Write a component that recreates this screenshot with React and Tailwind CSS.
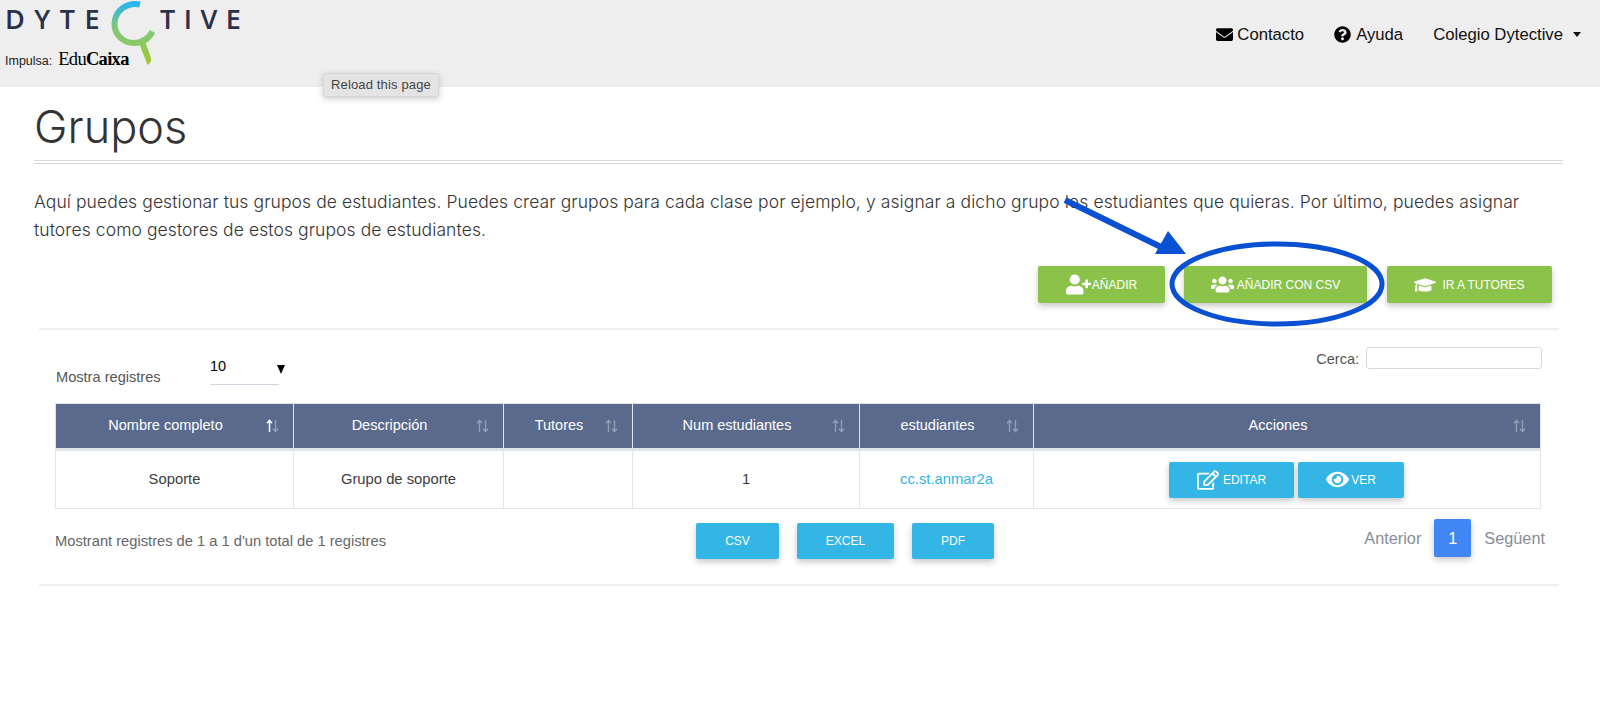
import { FaEnvelope, FaQuestionCircle, FaUserPlus, FaUsers, FaGraduationCap, FaRegEdit, FaEye } from "react-icons/fa";

const columnas = [
  { nombre: "Nombre completo", ancho: "w-[238px]", activa: true },
  { nombre: "Descripción", ancho: "w-[210px]" },
  { nombre: "Tutores", ancho: "w-[129px]" },
  { nombre: "Num estudiantes", ancho: "w-[227px]" },
  { nombre: "estudiantes", ancho: "w-[174px]" },
  { nombre: "Acciones", ancho: "w-[507px]" },
];

function SortIcon({ activa }) {
  return (
    <svg width="13" height="14" viewBox="0 0 13 14" className="absolute right-[14px] top-[15px]">
      <g fill="none" strokeWidth="1.4" stroke="#fff" opacity={activa ? 1 : 0.35}>
        <path d="M3.5 13V2M1 4.2 3.5 1.4 6 4.2" />
      </g>
      <g fill="none" strokeWidth="1.4" stroke="#fff" opacity="0.35">
        <path d="M9.5 1v11M7 9.8l2.5 2.8L12 9.8" />
      </g>
    </svg>
  );
}

function Boton({ color, className, children }) {
  return (
    <button className={`${color} ${className} flex items-center justify-center rounded-[2px] text-white text-[12px] shadow-[0_3px_6px_rgba(0,0,0,0.22)]`}>
      {children}
    </button>
  );
}

function Logo() {
  return (
    <div className="pl-[5px]">
      <div className="flex h-[66px] items-start">
        <span className="mt-[3px] w-[106px] text-[27px] leading-[32px] font-semibold tracking-[9.500px] text-[#2b3148] font-['Open_Sans',sans-serif]">DYTE</span>
        <svg width="50" height="68" viewBox="0 0 50 68" className="shrink-0">
          <defs>
            <linearGradient id="lupa" x1="0" y1="0" x2="0" y2="1">
              <stop offset="0" stopColor="#29b6ee" />
              <stop offset="0.55" stopColor="#7cc67c" />
              <stop offset="1" stopColor="#8cc865" />
            </linearGradient>
            <linearGradient id="mango" x1="0" y1="0" x2="0" y2="1">
              <stop offset="0" stopColor="#8cc865" />
              <stop offset="1" stopColor="#a2c926" />
            </linearGradient>
          </defs>
          <path d="M29 4.500C17 2 3.500 10 3.500 24c0 11 9 19 19.500 19 9 0 15-5 18.500-11.500" fill="none" stroke="url(#lupa)" strokeWidth="6" />
          <path d="M28 43l6-2 6 17c.8 3-1 5-3.500 7z" fill="url(#mango)" />
        </svg>
        <span className="mt-[3px] ml-[-1px] text-[27px] leading-[32px] font-semibold tracking-[8.500px] text-[#2b3148] font-['Open_Sans',sans-serif]">TIVE</span>
      </div>
    </div>
  );
}

export default function App() {
  return (
    <div className="relative min-h-screen bg-white text-[#333] font-['Liberation_Sans',sans-serif]">
      <nav className="flex h-[87px] justify-between bg-[#eeeeee]">
        <div className="relative">
          <Logo />
          <div className="-mt-[20px] flex items-baseline pl-[5px]">
            <span className="text-[12.500px] text-[#222]">Impulsa:</span>
            <span className="ml-[6px] text-[18.500px] tracking-[-0.7px] text-black font-['Liberation_Serif',serif]">Edu<b>Caixa</b></span>
          </div>
        </div>
        <div className="flex items-start gap-[30px] pt-[22px] pr-[19px] text-[16.700px] text-[#111]">
          <span className="flex items-center gap-[4px]"><FaEnvelope className="text-[17px] text-black" />Contacto</span>
          <span className="flex items-center gap-[5px]"><FaQuestionCircle className="text-[17px] text-black" />Ayuda</span>
          <span className="flex items-center">Colegio Dytective<i className="ml-[10px] h-0 w-0 border-x-[4.500px] border-t-[5px] border-x-transparent border-t-[#111]" /></span>
        </div>
      </nav>

      <main className="pl-[34px] pr-[37px]">
        <h1 className="pt-[10px] text-[45px] leading-[60px] font-light text-[#333] font-['Inter',sans-serif]">Grupos</h1>
        <div className="mt-[3px] h-[4px] border-y border-[#d8d8d8]" />

        <p className="mt-[24px] w-[1530px] text-[17.500px] leading-[27.500px] tracking-[0.09px] font-light text-[#333] font-['Inter',sans-serif]">
          Aquí puedes gestionar tus grupos de estudiantes. Puedes crear grupos para cada clase por ejemplo, y asignar a dicho grupo los estudiantes que quieras. Por último, puedes asignar<br />tutores como gestores de estos grupos de estudiantes.
        </p>

        <div className="mt-[23px] flex justify-end pr-[11px]">
          <Boton color="bg-[#8bc34a]" className="h-[37px] w-[127px] gap-[1px]"><FaUserPlus className="text-[25px]" />AÑADIR</Boton>
          <Boton color="bg-[#8bc34a]" className="ml-[19px] h-[37px] w-[183px] gap-[3px]"><FaUsers className="text-[23px]" />AÑADIR CON CSV</Boton>
          <Boton color="bg-[#8bc34a]" className="ml-[20px] h-[37px] w-[165px] gap-[6px]"><FaGraduationCap className="text-[22px]" />IR A TUTORES</Boton>
        </div>

        <section className="ml-[5px] mr-[4px] mt-[25px] border-y-2 border-[#eeeeee] pb-[25px]">
          <div className="flex h-[73px] justify-between pl-[17px] pr-[17px]">
            <div className="flex items-start">
              <span className="mt-[37px] w-[154px] text-[14.600px] text-[#555]">Mostra registres</span>
              <div className="relative mt-[20px] h-[35px] w-[69px] border-b border-[#cfd8e0] text-[14.500px] leading-[32px] text-black">
                10
                <span className="absolute -right-[6px] top-[15px] h-0 w-0 border-x-[4.500px] border-t-[9px] border-x-transparent border-t-black" />
              </div>
            </div>
            <div className="flex items-start pt-[17px]">
              <span className="mt-[2px] text-[14.500px] text-[#555]">Cerca:</span>
              <input className="ml-[7px] h-[22px] w-[176px] rounded-[3px] border border-[#d5dae2] bg-white" />
            </div>
          </div>

          <table className="ml-[16px] w-[1485px] table-fixed border-collapse">
            <thead>
              <tr>
                {columnas.map((c) => (
                  <th key={c.nombre} className={`${c.ancho} relative h-[46px] border border-[#dfe3ea] border-b-[3px] bg-[#5a6a8c] pr-[18px] text-center text-[14.500px] font-normal text-white`}>
                    {c.nombre}
                    <SortIcon activa={c.activa} />
                  </th>
                ))}
              </tr>
            </thead>
            <tbody>
              <tr className="h-[59px] text-center text-[14.800px] text-[#3d3d3d]">
                <td className="border border-[#e2e5ea]">Soporte</td>
                <td className="border border-[#e2e5ea]">Grupo de soporte</td>
                <td className="border border-[#e2e5ea]"></td>
                <td className="border border-[#e2e5ea]">1</td>
                <td className="border border-[#e2e5ea] text-[#33b5e5]">cc.st.anmar2a</td>
                <td className="border border-[#e2e5ea]">
                  <div className="flex justify-center gap-[4px] pr-[1px]">
                    <Boton color="bg-[#33b5e5]" className="h-[36px] w-[125px] gap-[4px]"><FaRegEdit className="text-[22px]" />EDITAR</Boton>
                    <Boton color="bg-[#33b5e5]" className="h-[36px] w-[106px] gap-[2px]"><FaEye className="text-[23px]" />VER</Boton>
                  </div>
                </td>
              </tr>
            </tbody>
          </table>

          <div className="ml-[16px] mt-[10px] flex h-[40px] w-[1490px] items-start">
            <span className="mt-[11px] w-[641px] text-[14.700px] text-[#666]">Mostrant registres de 1 a 1 d'un total de 1 registres</span>
            <Boton color="bg-[#33b5e5]" className="mt-[4px] h-[36px] w-[83px]">CSV</Boton>
            <Boton color="bg-[#33b5e5]" className="ml-[18px] mt-[4px] h-[36px] w-[97px]">EXCEL</Boton>
            <Boton color="bg-[#33b5e5]" className="ml-[18px] mt-[4px] h-[36px] w-[82px]">PDF</Boton>
            <div className="ml-auto flex items-center gap-[13px] text-[16.300px] text-[#868e96]">
              <span>Anterior</span>
              <span className="flex h-[38px] w-[37px] items-center justify-center rounded-[2px] bg-[#4285f4] text-white shadow-[0_3px_6px_rgba(0,0,0,0.22)]">1</span>
              <span>Següent</span>
            </div>
          </div>
        </section>
      </main>

      <div className="absolute left-[323px] top-[73px] rounded-[2px] border border-[#d6d6d6] bg-[#e4e4e4] px-[7px] py-[3px] text-[13px] leading-[16px] tracking-[0.15px] text-[#444] shadow-[0_2px_6px_rgba(0,0,0,0.2)]">
        Reload this page
      </div>

      <svg className="pointer-events-none absolute left-[1050px] top-[190px]" width="350" height="145" viewBox="1050 190 350 145">
        <ellipse cx="1277" cy="284" rx="105" ry="40" fill="none" stroke="#0a50d2" strokeWidth="5" />
        <path d="M1065 200 1165 249" stroke="#0a50d2" strokeWidth="6" fill="none" />
        <path d="M1186 254 1155 254 1168 231z" fill="#0a50d2" />
      </svg>
    </div>
  );
}
